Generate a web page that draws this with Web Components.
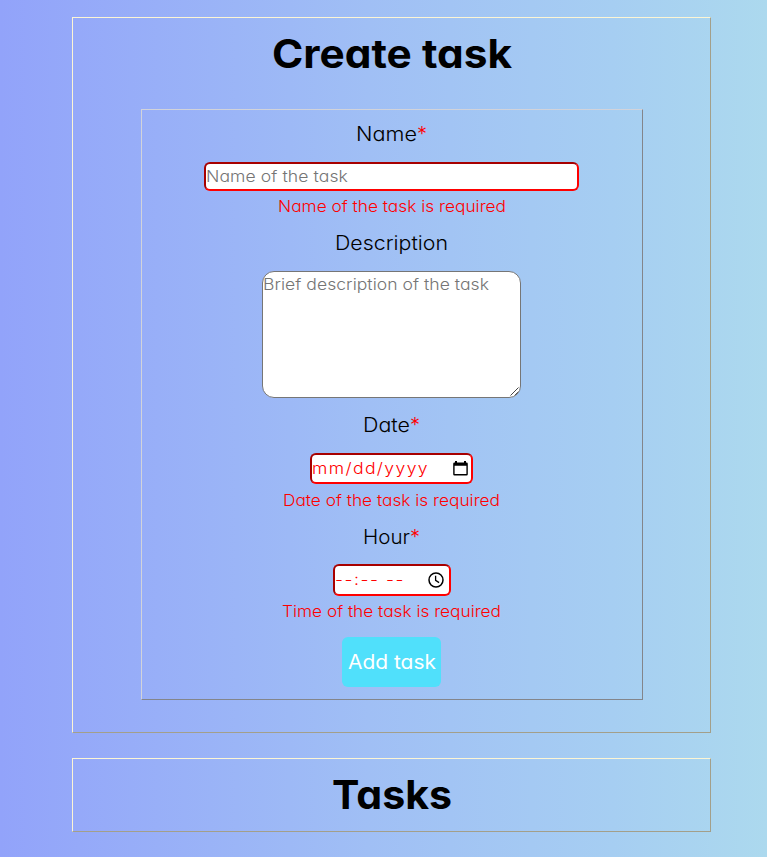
<!DOCTYPE html>
<html lang="en">
<head>
<meta charset="utf-8">
<title>Create task</title>
<style>
html { height: 100%; }
body { margin: 0; min-height: 100%; font-family: Inter, "Open Sans", sans-serif; font-weight: 340; font-feature-settings: "cv11"; color: #000; background: linear-gradient(90deg, #92a3fa 0%, #a0bff5 48%, #a6cef2 80%, #acd9ee 100%); }
</style>
</head>
<body>
<task-app></task-app>
<script>
const define = (name, html, setup) => customElements.define(name, class extends HTMLElement {
  connectedCallback() {
    if (this.shadowRoot) return;
    const t = document.createElement('template');
    t.innerHTML = html;
    this.attachShadow({ mode: 'open' }).append(t.content.cloneNode(true));
    if (setup) setup(this);
  }
});

// Text run widened to the width given in its "span" attribute:
// the glyphs stretch up to 12%, tracking takes up what is left.
define('ui-text', `<style>:host{display:inline-block;white-space:pre;text-align:left}span{display:inline-block;transform-origin:0 50%}</style><span><slot></slot></span>`, el => {
  const s = el.shadowRoot.querySelector('span');
  const target = parseFloat(el.getAttribute('span'));
  const w = s.getBoundingClientRect().width, n = el.textContent.length;
  const k = Math.min(1.12, target / w);
  s.style.letterSpacing = ((target / k - w) / n).toFixed(3) + 'px';
  s.style.transform = `scaleX(${k.toFixed(4)})`;
  el.style.width = target + 'px';
});

define('task-panel', `<style>
:host{display:block;box-sizing:border-box;width:639px;margin-left:72px;border:1px solid;border-color:#fcf5d4 #a39f8a #a39f8a #fcf5d4}
h1{margin:0;height:73px;line-height:73px;text-align:center;font-size:39.5px;font-weight:700}
</style><h1><slot name="title"></slot></h1><slot></slot>`);

define('task-form', `<style>
:host{display:flex;flex-direction:column;align-items:center;box-sizing:border-box;width:502px;height:591px;margin:18px 0 32px 68px;padding:9px 1px 0 0;border:1px solid;border-color:#d2d3da #83858b #83858b #d2d3da}
</style><slot></slot>`);

define('form-label', `<style>
:host{display:flex;justify-content:center;height:30px;line-height:30px;font-size:19.5px;margin-bottom:13px}
i{font-style:normal;color:red;width:10px;font-size:20px}
i:empty{display:none}
</style><slot></slot><i></i>`, el => {
  if (el.hasAttribute('required')) el.shadowRoot.querySelector('i').textContent = '*';
});

define('form-input', `<style>
:host{display:flex;align-items:center;justify-content:space-between;box-sizing:border-box;width:var(--w);height:var(--h);border:2px solid;border-color:#a70000 red red #a70000;border-radius:6px;background:#fff;font-size:15.7px;line-height:24px;color:var(--ink,red)}
</style><slot></slot><slot name="icon"></slot>`);

define('form-error', `<style>:host{display:block;height:24px;line-height:24px;margin:4px 0 9px;font-size:15.7px;color:red}</style><slot></slot>`);

define('form-area', `<style>
:host{display:flex;justify-content:space-between;box-sizing:border-box;width:259px;height:127px;margin-bottom:12px;border:1px solid #767676;border-radius:12px;background:#fff;color:#757575;font-size:15.7px;line-height:25px;overflow:hidden}
svg{align-self:flex-end;flex:none;margin-left:-12px}
</style><slot></slot><svg width="11" height="11" viewBox="0 0 11 11" stroke="#444" stroke-width="1"><path d="M1.5 9.5 9.5 1.5M5.5 9.5l4-4"/></svg>`);

define('calendar-icon', `<style>:host{display:block;margin-right:3px;height:17px}svg{display:block}</style>
<svg width="15" height="17" viewBox="0 0 15 17"><path fill="#000" fill-rule="evenodd" d="M2 1h2v1.5h7V1h2v1.5h.5q1.3 0 1.3 1.3v10.4q0 1.3-1.3 1.3h-12q-1.3 0-1.3-1.3V3.8q0-1.3 1.3-1.3H2ZM1.6 5.8v8.3h11.8V5.8Z"/></svg>`);

define('clock-icon', `<style>:host{display:block;margin-right:5px;height:16px}svg{display:block}</style>
<svg width="16" height="16" viewBox="0 0 16 16" fill="none" stroke="#000"><circle cx="8" cy="8" r="7" stroke-width="1.5"/><path stroke-width="1.3" d="M7.6 3.8v4.6l3.5 2.2"/></svg>`);

define('task-button', `<style>
:host{display:flex;justify-content:center;box-sizing:border-box;width:99px;height:50px;line-height:50px;margin-top:4px;border-radius:6px;background:#50e0fb;color:#fff;font-size:19.5px;font-weight:440}
</style><slot></slot>`);

define('task-app', `<style>
:host{display:flex;flex-direction:column;gap:25px;padding:17px 0 25px}
.name{--w:375px;--h:29px;--ink:#757575}
.date{--w:163px;--h:31px}
.time{--w:118px;--h:32px;margin-left:1px}
.late{margin-top:5px}
</style>
<task-panel><ui-text slot="title" span="240">Create task</ui-text>
<task-form>
<form-label required><ui-text span="61">Name</ui-text></form-label>
<form-input class="name"><ui-text span="142">Name of the task</ui-text></form-input>
<form-error><ui-text span="228">Name of the task is required</ui-text></form-error>
<form-label><ui-text span="113">Description</ui-text></form-label>
<form-area><ui-text span="226">Brief description of the task</ui-text></form-area>
<form-label required><ui-text span="47">Date</ui-text></form-label>
<form-input class="date"><ui-text span="117">mm/dd/yyyy</ui-text><calendar-icon slot="icon"></calendar-icon></form-input>
<form-error class="late"><ui-text span="217">Date of the task is required</ui-text></form-error>
<form-label required style="margin-bottom:12px"><ui-text span="47">Hour</ui-text></form-label>
<form-input class="time"><ui-text span="70">--:-- --</ui-text><clock-icon slot="icon"></clock-icon></form-input>
<form-error><ui-text span="219">Time of the task is required</ui-text></form-error>
<task-button><ui-text span="88">Add task</ui-text></task-button>
</task-form></task-panel>
<task-panel style="height:74px"><ui-text slot="title" span="120">Tasks</ui-text></task-panel>`);
</script>
</body>
</html>
